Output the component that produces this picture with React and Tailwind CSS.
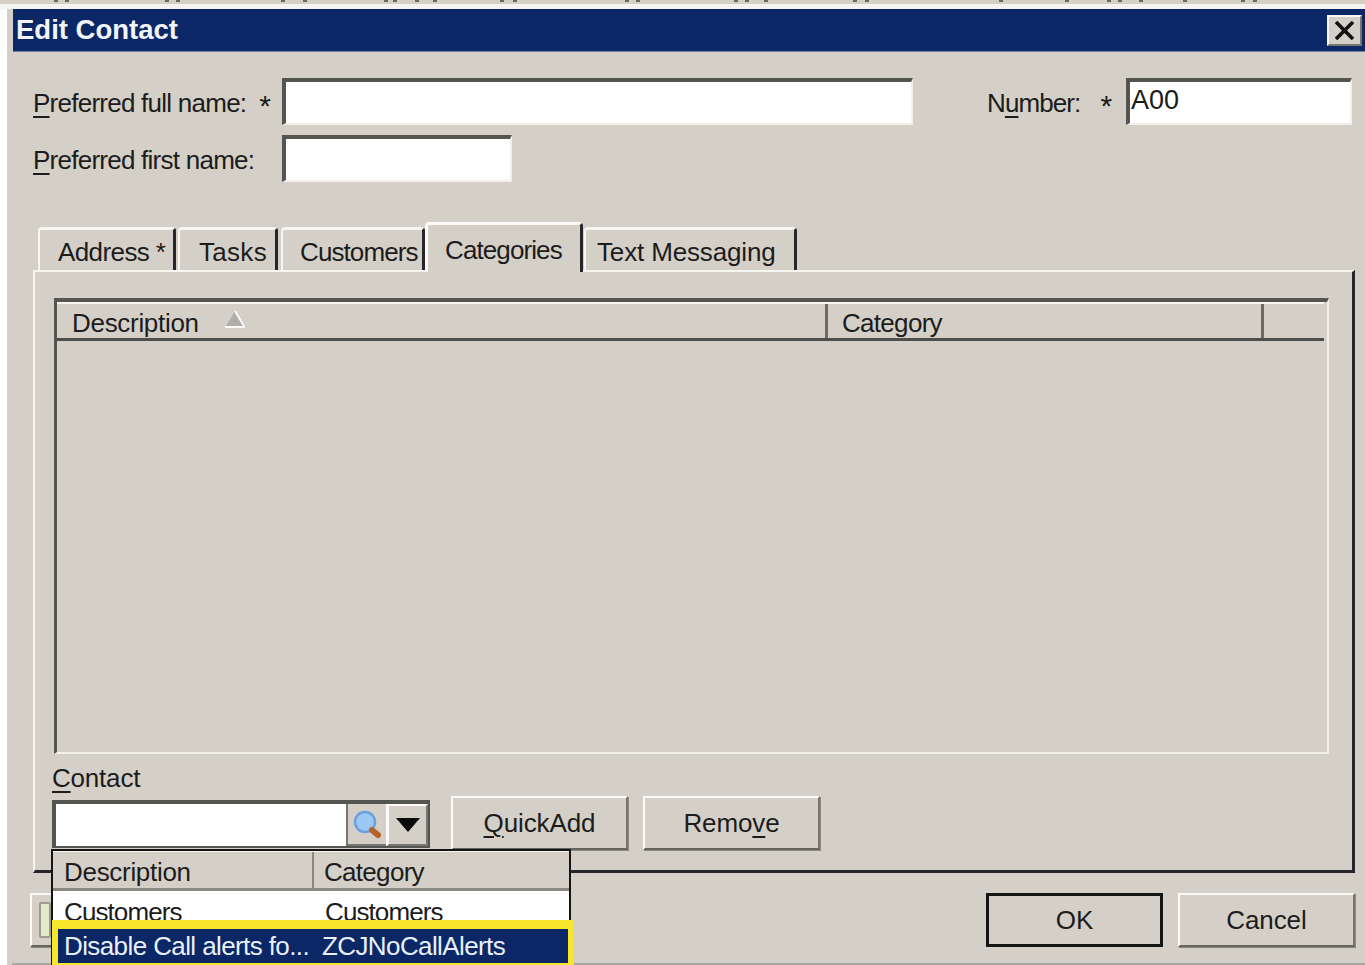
const font = "font-['Liberation_Sans',Arial,sans-serif]"

const Ul = ({ children }) => <span className="underline decoration-2 underline-offset-[4px]">{children}</span>

const Field = ({ className, children }) => (
  <div className={`border-2 border-t-[4px] border-l-[4px] border-t-[#55554f] border-l-[#55554f] border-r-[#f2f0ea] border-b-[#f2f0ea] bg-white ${className}`}>
    {children}
  </div>
)

const Button = ({ className, children }) => (
  <div className={`h-[54px] w-[177px] flex items-center justify-center border-2 border-t-[#fbfaf6] border-l-[#fbfaf6] border-r-[#77756f] border-b-[#66645e] shadow-[1px_1px_0_#8a8880] text-[26px] tracking-[-0.1px] leading-none text-[#1c1c1c] ${className}`}>
    {children}
  </div>
)

const Tab = ({ label, className, active }) => (
  <div
    className={
      active
        ? `h-[50px] -mb-[2px] pt-[10px] flex rounded-t-[4px] border-t-[3px] border-l-[3px] border-t-[#fbfaf6] border-l-[#fbfaf6] border-r-[3px] border-r-[#26262a] bg-[#d4d0c8] z-10 relative text-[26px] leading-[30px] text-[#1c1c1c] ${className}`
        : `h-[43px] pt-[7px] flex rounded-t-[4px] border-t-[3px] border-l-[2px] border-t-[#f6f5f0] border-l-[#f6f5f0] border-r-[3px] border-r-[#26262a] text-[26px] leading-[30px] text-[#1c1c1c] ${className}`
    }
  >
    {label}
  </div>
)

// magnifier on the lookup button
const SearchIcon = () => (
  <svg width="32" height="32" viewBox="0 0 32 32">
    <circle cx="14" cy="14" r="10" fill="#9cc8f5" stroke="#6aa0e0" strokeWidth="2.5" />
    <path d="M21 22 L27 27" stroke="#b8622a" strokeWidth="6" strokeLinecap="round" />
  </svg>
)

// clipped descenders of whatever sits behind the dialog
const flecks = [54, 65, 165, 176, 281, 303, 384, 393, 415, 433, 500, 513, 625, 636, 734, 745, 764, 853, 865, 999, 1065, 1107, 1118, 1139, 1183, 1241, 1253]

export default function App() {
  return (
    <div className={`${font} relative w-[1365px] h-[965px] overflow-hidden bg-white flex flex-col`}>
      <div className="h-[4px] shrink-0 bg-[#d4d0c8]">
        <svg width="1365" height="4" className="block">
          {flecks.map((x) => (
            <rect key={x} x={x} y="0" width="4" height="2" fill="#6a6862" />
          ))}
        </svg>
      </div>
      <div className="h-[5px] shrink-0 bg-[#f4f3ef]" />

      <div className="flex-1 ml-[7px] pl-[5px] bg-[#d4d0c8] min-h-0 flex flex-col">
        <div className="flex-1 min-h-0 flex flex-col border-b-2 border-b-[#a9a7a1] pl-[1px] bg-[#d4d0c8] relative">
          {/* Title bar */}
          <div className="h-[43px] shrink-0 bg-[#0c2765] flex items-center justify-between pl-[3px] pr-[3px] border-b border-b-[#6f7fa8]">
            <span className="text-[27.5px] font-bold text-[#f2f5fa] leading-none">Edit Contact</span>
            <div className="w-[35px] h-[31px] bg-[#d4d0c8] border-2 border-t-[#f8f7f3] border-l-[#f8f7f3] border-r-[#77756f] border-b-[#77756f] flex items-center justify-center">
              <svg width="21" height="19" viewBox="0 0 21 19">
                <path d="M2 1 L19 18 M19 1 L2 18" stroke="#111" strokeWidth="3.6" />
              </svg>
            </div>
          </div>

          {/* Name fields */}
          <div className="flex pt-[26px] text-[26px] leading-none text-[#1c1c1c]">
            <div className="w-[269px] pl-[20px] shrink-0 flex flex-col gap-[10px]">
              <div className="h-[47px] flex items-center">
                <span className="mt-[2px] tracking-[-0.75px]"><Ul>P</Ul>referred full name:</span>
                <span className="ml-[13px] mt-[8px] text-[30px]">*</span>
              </div>
              <div className="h-[47px] flex items-center">
                <span className="mt-[2px] tracking-[-0.75px]"><Ul>P</Ul>referred first name:</span>
              </div>
            </div>
            <div className="flex flex-col gap-[10px]">
              <Field className="w-[631px] h-[47px]" />
              <Field className="w-[230px] h-[47px]" />
            </div>
            <div className="ml-[74px] w-[139px] h-[47px] flex items-center">
              <span className="mt-[2px] tracking-[-0.9px]">N<Ul>u</Ul>mber:</span>
              <span className="ml-[20px] mt-[8px] text-[30px]">*</span>
            </div>
            <Field className="w-[226px] h-[47px] pl-[1px] pt-[2px] text-[27px] leading-[32px]">A00</Field>
          </div>

          {/* Tabs */}
          <div className="flex items-end pl-[25px] mt-[38px] h-[50px]">
            <Tab label="Address *" className="w-[138px] pl-[18px] tracking-[-0.6px]" />
            <div className="w-[2px]" />
            <Tab label="Tasks" className="w-[100px] pl-[19px] tracking-[0.3px]" />
            <div className="w-[3px]" />
            <Tab label="Customers" className="w-[144px] pl-[17px] tracking-[-0.9px]" />
            <Tab label="Categories" className="w-[158px] pl-[17px] tracking-[-0.9px]" active />
            <div className="w-[1px]" />
            <Tab label="Text Messaging" className="w-[213px] pl-[11px] tracking-[-0.15px]" />
          </div>

          {/* Tab panel */}
          <div className="ml-[20px] mr-[10px] h-[603px] shrink-0 border-t-2 border-l-2 border-t-[#f6f5f0] border-l-[#f6f5f0] border-r-[3px] border-b-[3px] border-r-[#26262a] border-b-[#26262a] pt-[26px] pl-[19px] pr-[23px] flex flex-col">
            <div className="h-[456px] shrink-0 border-2 border-t-[4px] border-l-[3px] border-t-[#55554f] border-l-[#55554f] border-r-[#f2f0ea] border-b-[#f2f0ea] flex flex-col">
              <div className="h-[39px] flex border-t-2 border-t-[#f6f5f0] border-b-[3px] border-b-[#4e4e4a] text-[26px] text-[#1c1c1c] leading-[38px] tracking-[-0.3px] mr-[3px]">
                <div className="w-[771px] pl-[15px] flex border-r-[3px] border-r-[#6a6a66]">
                  Description
                  <svg width="22" height="20" viewBox="0 0 22 20" className="ml-[25px] mt-[6px]">
                    <path d="M11 1 L20 16 L2 16 Z" fill="#b0aea8" />
                    <path d="M1 17 H21 M11 1 L20 16" stroke="#fbfaf6" strokeWidth="2" fill="none" />
                  </svg>
                </div>
                <div className="w-[436px] pl-[14px] border-r-[3px] border-r-[#6a6a66] tracking-[-0.7px]">Category</div>
              </div>
            </div>

            <div className="mt-[9px] text-[26px] leading-[30px] text-[#1c1c1c] tracking-[-0.2px] -ml-[2px]"><Ul>C</Ul>ontact</div>

            <div className="mt-[3px] -ml-[2px] flex items-start">
              <div className="mt-[4px] w-[378px] h-[48px] flex border-2 border-t-[4px] border-l-[4px] border-t-[#55554f] border-l-[#55554f] border-b-[#55554f] border-r-[#55554f] bg-white">
                <div className="flex-1" />
                <div className="w-[40px] bg-[#d4d0c8] border-l-2 border-b-2 border-l-[#77756f] border-b-[#77756f] flex items-center justify-center">
                  <SearchIcon />
                </div>
                <div className="w-[41px] ml-[1px] bg-[#d4d0c8] border-2 border-t-[#fbfaf6] border-l-[#fbfaf6] border-r-[#77756f] border-b-[#77756f] flex items-center justify-center">
                  <svg width="24" height="14" viewBox="0 0 24 14">
                    <path d="M0 0 H24 L12 14 Z" fill="#0a0a0a" />
                  </svg>
                </div>
              </div>
              <Button className="ml-[21px]"><span><Ul>Q</Ul>uickAdd</span></Button>
              <Button className="ml-[15px]"><span>Remo<Ul>v</Ul>e</span></Button>
            </div>
          </div>

          {/* Bottom buttons */}
          <div className="flex pt-[20px] pl-[17px]">
            <Button className="w-[24px]! border-r-0!">
              <div className="w-[12px] h-[36px] ml-[4px] bg-[#e6e8cc] border-2 border-[#9b9b90] rounded-[2px]" />
            </Button>
            <Button className="ml-[932px] border-[3px]! border-[#141414]! shadow-none!">OK</Button>
            <Button className="ml-[15px]">Cancel</Button>
          </div>

          {/* Lookup dropdown, open over the dialog */}
          <div className="absolute left-[39px] top-[840px] w-[520px] h-[116px] bg-white border-2 border-[#141414] border-b-0 flex flex-col text-[26px] text-[#1c1c1c] leading-none">
            <div className="h-[40px] shrink-0 flex bg-[#d4d0c8] border-t-[1px] border-t-[#f6f5f0] border-b-[3px] border-b-[#8a8880] tracking-[-0.3px]">
              <div className="w-[261px] pl-[11px] pt-[7px] border-r-2 border-r-[#8a8880]">Description</div>
              <div className="pl-[10px] pt-[7px] tracking-[-0.7px]">Category</div>
            </div>
            <div className="flex pt-[8px] h-[29px] overflow-hidden tracking-[-0.9px]">
              <div className="w-[261px] pl-[11px]">Customers</div>
              <div className="pl-[11px]">Customers</div>
            </div>
          </div>
          <div className="absolute left-[40px] top-[911px] w-[522px] h-[46px] border-[6px] border-t-[9px] border-[#f8e62c] border-b-[3px] bg-[#0c2765] flex items-center text-[26px] text-[#e8f0fa] leading-none tracking-[-0.6px] overflow-hidden">
            <div className="w-[264px] pl-[6px] whitespace-nowrap">Disable Call alerts fo...</div>
            <div className="whitespace-nowrap">ZCJNoCallAlerts</div>
          </div>
        </div>
      </div>
    </div>
  )
}
